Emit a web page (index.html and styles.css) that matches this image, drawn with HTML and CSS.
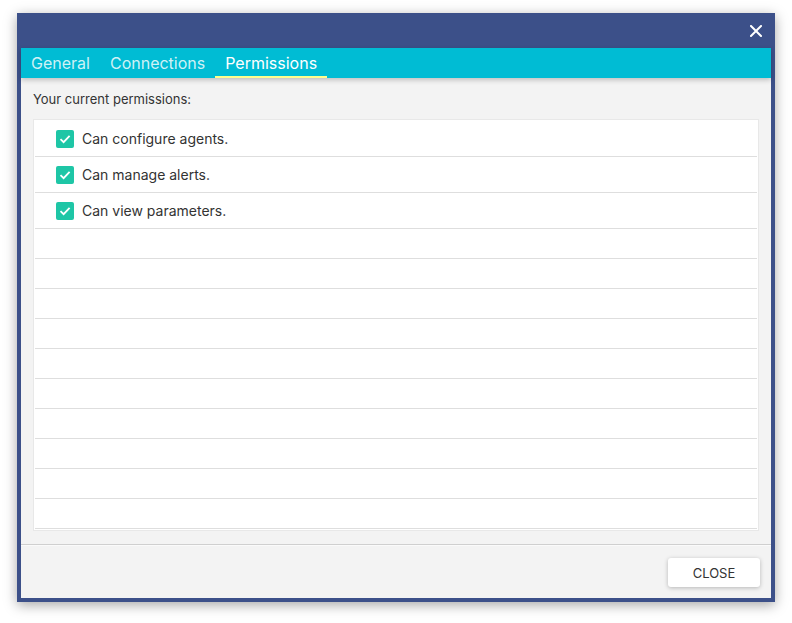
FILE: index.html
```html
<!DOCTYPE html>
<html>
<head>
<meta charset="utf-8">
<link rel="stylesheet" href="styles.css">
</head>
<body>
<div class="dialog">
  <div class="titlebar">
    <svg class="close-x" width="12" height="12" viewBox="0 0 12 12"><path d="M1 1 L11 11 M11 1 L1 11" stroke="#fff" stroke-width="2" stroke-linecap="square"/></svg>
  </div>
  <div class="tabs">
    <div class="tab">General</div>
    <div class="tab">Connections</div>
    <div class="tab active">Permissions</div>
  </div>
  <div class="content">
    <div class="label">Your current permissions:</div>
    <div class="list">
      <div class="row item"><span class="check"><svg width="18" height="18" viewBox="0 0 18 18"><path d="M4.5 9.2 L7.6 12.2 L13.6 5.8" fill="none" stroke="#fff" stroke-width="1.8"/></svg></span>Can configure agents.</div>
      <div class="row item"><span class="check"><svg width="18" height="18" viewBox="0 0 18 18"><path d="M4.5 9.2 L7.6 12.2 L13.6 5.8" fill="none" stroke="#fff" stroke-width="1.8"/></svg></span>Can manage alerts.</div>
      <div class="row item"><span class="check"><svg width="18" height="18" viewBox="0 0 18 18"><path d="M4.5 9.2 L7.6 12.2 L13.6 5.8" fill="none" stroke="#fff" stroke-width="1.8"/></svg></span>Can view parameters.</div>
      <div class="row empty"></div>
      <div class="row empty"></div>
      <div class="row empty"></div>
      <div class="row empty"></div>
      <div class="row empty"></div>
      <div class="row empty"></div>
      <div class="row empty"></div>
      <div class="row empty"></div>
      <div class="row empty"></div>
      <div class="row empty"></div>
    </div>
  </div>
  <div class="footer">
    <button class="btn">CLOSE</button>
  </div>
</div>
</body>
</html>
```
FILE: styles.css
```css
* { box-sizing: border-box; }
html, body { margin: 0; padding: 0; background: #fff; }
body {
  padding: 13px 0 20px 17px;
  font-family: "Inter", "Roboto", sans-serif;
  color: #333;
}
.dialog {
  width: 758px;
  height: 589px;
  background: #3c5089;
  padding: 0 4px 4px 4px;
  display: flex;
  flex-direction: column;
  box-shadow: 0 3px 12px rgba(0,0,0,0.35);
}
.titlebar {
  height: 35px;
  display: flex;
  justify-content: flex-end;
  align-items: center;
  padding-right: 9px;
}
.close-x { display: block; margin-top: 1px; }
.tabs {
  height: 30px;
  background: #00bcd4;
  display: flex;
  box-shadow: 0 2px 5px rgba(0,0,0,0.22);
  position: relative;
  z-index: 1;
}
.tab {
  padding: 2px 10px 0 10px;
  font-size: 16px;
  line-height: 26px;
  color: rgba(255,255,255,0.82);
  border-bottom: 2px solid transparent;
}
.tab.active {
  color: #fff;
  border-bottom-color: #ffff8d;
}
.content {
  height: 466px;
  background: #f3f3f3;
  padding: 13px 12px 0 12px;
}
.label {
  font-size: 13px;
  line-height: 16px;
  margin-bottom: 12px;
  color: #333;
}
.list {
  height: 412px;
  background: #fff;
  border: 1px solid #e8e8e8;
  padding: 1px 1px 0 1px;
  overflow: hidden;
}
.row {
  border-bottom: 1px solid #dedede;
}
.item {
  height: 36px;
  display: flex;
  align-items: center;
  padding-left: 21px;
  font-size: 14px;
  color: #333;
}
.empty { height: 30px; }
.check {
  width: 18px;
  height: 18px;
  background: #1ec6a6;
  border-radius: 2px;
  margin-right: 8px;
  display: flex;
}
.check svg { display: block; }
.footer {
  flex: 1;
  background: #f3f3f3;
  border-top: 1px solid #cfcfcf;
  box-shadow: inset 0 1px 0 #fafafa;
  display: flex;
  justify-content: flex-end;
  padding: 13px 11px 0 0;
}
.btn {
  width: 92px;
  height: 29px;
  background: #fff;
  border: none;
  border-radius: 3px;
  box-shadow: 0 1px 4px rgba(0,0,0,0.25);
  font-family: "Inter", "Roboto", sans-serif;
  font-size: 13px;
  color: #333;
  padding: 0;
}
```
